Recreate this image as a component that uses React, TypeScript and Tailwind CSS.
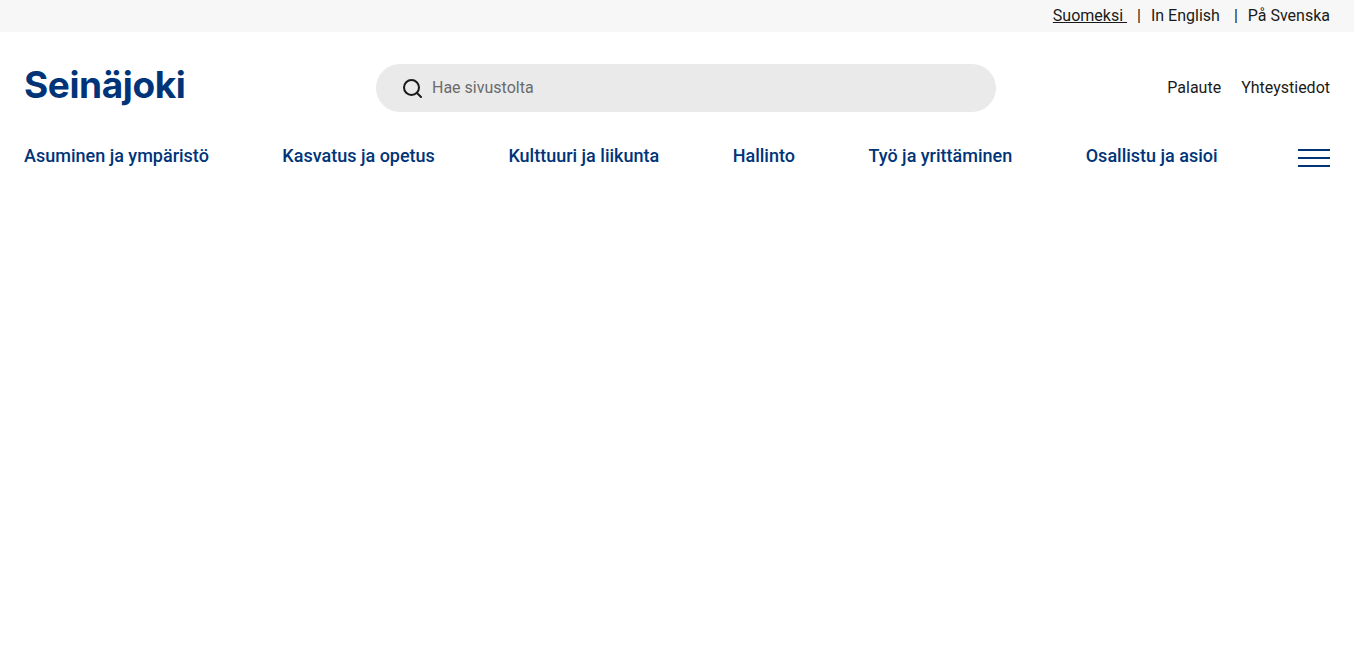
import React from 'react';

const navItems = [
    'Asuminen ja ympäristö',
    'Kasvatus ja opetus',
    'Kulttuuri ja liikunta',
    'Hallinto',
    'Työ ja yrittäminen',
    'Osallistu ja asioi',
];

const SearchIcon: React.FC = () => (
    <svg width="20" height="20" viewBox="0 0 20 20" fill="none" stroke="#1a1a1a" strokeWidth="2" className="shrink-0">
        <circle cx="9.5" cy="9.5" r="7.5" />
        <path d="M15 15l4 4" strokeLinecap="round" />
    </svg>
);

const App: React.FC = () => {
    return (
        <div className="mr-[12px] min-h-[651px] bg-white font-['Roboto',sans-serif] text-base text-[#1a1a1a]">
            <div className="flex h-8 items-center justify-end bg-[#f7f7f7] pr-6">
                <a className="underline whitespace-pre">Suomeksi </a>
                <span className="ml-2.5">|</span>
                <a className="ml-2.5">In English</a>
                <span className="ml-3.5">|</span>
                <a className="ml-2.5">På Svenska</a>
            </div>
            <header className="flex h-[110px] items-center justify-between px-6 pt-[2px]">
                <div className="mb-[8px] w-[352px] font-['Inter',sans-serif] text-[37px] leading-none font-bold tracking-[-0.4px] text-[#003479]">Seinäjoki</div>
                <div className="flex h-12 w-[620px] items-center gap-[10px] rounded-full bg-[#eaeaea] pl-[26px] text-[#6b6b6b]">
                    <SearchIcon />
                    <span>Hae sivustolta</span>
                </div>
                <div className="flex w-[334px] justify-end gap-5">
                    <a>Palaute</a>
                    <a>Yhteystiedot</a>
                </div>
            </header>
            <nav className="flex items-center justify-between px-6">
                <ul className="flex gap-[73.5px] text-lg leading-7 font-medium text-[#003479]">
                    {navItems.map((item) => (
                        <li key={item}>{item}</li>
                    ))}
                </ul>
                <button className="mt-[4px] flex w-8 flex-col gap-1.5">
                    <span className="h-0.5 bg-[#003479]" />
                    <span className="h-0.5 bg-[#003479]" />
                    <span className="h-0.5 bg-[#003479]" />
                </button>
            </nav>
        </div>
    );
};

export default App;
